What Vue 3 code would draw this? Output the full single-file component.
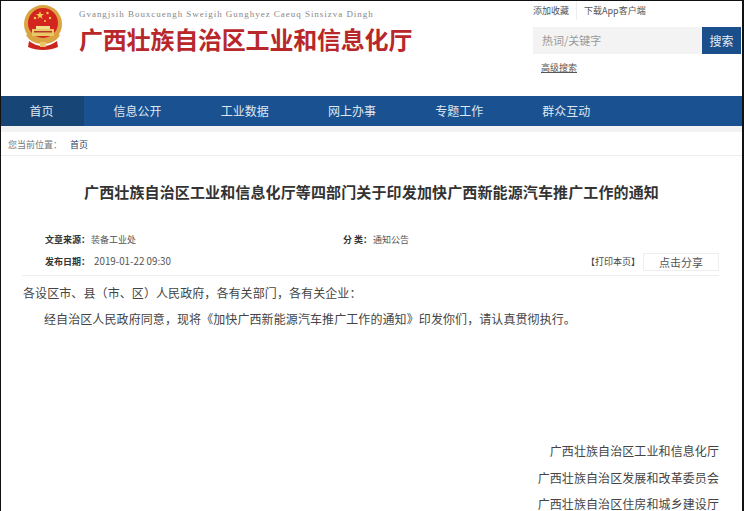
<template>
  <div class="page">
    <header class="header">
      <div class="brand">
        <svg class="emblem" viewBox="0 0 40 46" width="40" height="46">
          <circle cx="20" cy="19" r="19" fill="#d9a441" />
          <circle cx="20" cy="18" r="15" fill="#d3241f" />
          <path d="M17 6l1 3h3l-2.500 2 1 3-2.500-2-2.500 2 1-3L13 9h3z" fill="#f2cf4f" />
          <circle cx="12" cy="13" r="1.200" fill="#f2cf4f" />
          <circle cx="24.500" cy="8" r="1.200" fill="#f2cf4f" />
          <circle cx="27" cy="13" r="1.200" fill="#f2cf4f" />
          <circle cx="22" cy="16" r="1" fill="#f2cf4f" />
          <path d="M9 24h22v7H9z" fill="#e9c766" />
          <path d="M13 21h14v3H13z" fill="#f3dc8c" />
          <path d="M11 26h18v1.500H11z" fill="#b5382a" />
          <path d="M3 30c3 6 10 9 17 9s14-3 17-9l-3-1c-3 4-9 6-14 6s-11-2-14-6z" fill="#d9a441" />
          <path d="M6 36c4 3 9 5 14 5s10-2 14-5l1 6c-4 2-10 3-15 3S9 44 5 42z" fill="#c9261f" />
          <path d="M17 37h6v5h-6z" fill="#e9c766" />
        </svg>
        <div class="brand__text">
          <div class="brand__latin">Gvangjsih Bouxcuengh Sweigih Gunghyez Caeuq Sinsizva Dingh</div>
          <div class="brand__name">广西壮族自治区工业和信息化厅</div>
        </div>
      </div>
      <div class="tools">
        <div class="tools__links">
          <span class="tools__fav">添加收藏</span>
          <span>下载App客户端</span>
        </div>
        <div class="search">
          <div class="search__input">热词/关键字</div>
          <div class="search__btn">搜索</div>
        </div>
        <div class="tools__adv">高级搜索</div>
      </div>
    </header>

    <nav class="nav">
      <a
        v-for="(item, i) in navItems"
        :key="item"
        :class="['nav__item', { 'nav__item--active': i === 0 }]"
      >{{ item }}</a>
    </nav>

    <div class="crumb">
      <span class="crumb__label">您当前位置&#xFF1A;</span>
      <span class="crumb__link">首页</span>
    </div>

    <h1 class="title">广西壮族自治区工业和信息化厅等四部门关于印发加快广西新能源汽车推广工作的通知</h1>

    <div class="meta">
      <div class="meta__row">
        <div class="meta__source"><b>文章来源&#xFF1A;</b><span>装备工业处</span></div>
        <div class="meta__type"><b>分 类&#xFF1A;</b><span>通知公告</span></div>
      </div>
      <div class="meta__row meta__row--date">
        <div class="meta__date"><b>发布日期&#xFF1A;</b><span>2019-01-22 09:30</span></div>
        <div class="meta__actions">
          <span class="meta__print">【打印本页】</span>
          <span class="meta__share">点击分享</span>
        </div>
      </div>
    </div>

    <article class="body">
      <p class="body__line">各设区市、县&#xFF08;市、区&#xFF09;人民政府&#xFF0C;各有关部门&#xFF0C;各有关企业&#xFF1A;</p>
      <p class="body__line body__line--indent">经自治区人民政府同意&#xFF0C;现将《加快广西新能源汽车推广工作的通知》印发你们&#xFF0C;请认真贯彻执行。</p>
      <div class="signers">
        <p v-for="name in signers" :key="name">{{ name }}</p>
      </div>
    </article>
  </div>
</template>

<script setup>
const navItems = ['首页', '信息公开', '工业数据', '网上办事', '专题工作', '群众互动']

const signers = [
  '广西壮族自治区工业和信息化厅',
  '广西壮族自治区发展和改革委员会',
  '广西壮族自治区住房和城乡建设厅'
]
</script>

<style>
html,
body {
  margin: 0;
  height: 511px;
  overflow: hidden;
  background: #fff;
}
</style>

<style scoped>
.page {
  box-sizing: border-box;
  width: 744px;
  height: 511px;
  overflow: hidden;
  border-top: 1px solid #111;
  border-left: 1px solid #111;
  border-right: 2px solid #111;
  background: #fff;
  color: #444;
  font-family: "Noto Sans CJK SC", "Liberation Sans", sans-serif;
}

.header {
  display: flex;
  justify-content: space-between;
  height: 95px;
}

.brand {
  display: flex;
  align-items: flex-start;
  padding: 4px 0 0 22px;
}

.emblem {
  margin-right: 16px;
}

.brand__latin {
  margin-top: 3px;
  font-family: "Liberation Serif", serif;
  font-size: 9px;
  line-height: 12px;
  letter-spacing: 0.97px;
  color: #888;
}

.brand__name {
  margin-top: 2px;
  font-size: 24px;
  line-height: 34px;
  font-weight: 700;
  letter-spacing: -0.2px;
  color: #b8282b;
}

.tools {
  width: 208px;
  margin-right: 1px;
  font-size: 9px;
}

.tools__links {
  display: flex;
  height: 19px;
  line-height: 19px;
  color: #555;
}

.tools__fav {
  margin-right: 7px;
  padding-right: 7px;
  border-right: 1px solid #eee;
}

.search {
  display: flex;
  margin-top: 7px;
  height: 27px;
}

.search__input {
  flex: 1;
  padding-left: 9px;
  background: #f3f3f3;
  font-size: 11px;
  line-height: 27px;
  color: #999;
}

.search__btn {
  width: 39px;
  background: #1a4f8b;
  font-size: 12px;
  line-height: 27px;
  text-align: center;
  color: #e6edf5;
}

.tools__adv {
  margin: 7px 0 0 8px;
  line-height: 13px;
  text-decoration: underline;
  color: #555;
}

.nav {
  display: flex;
  height: 30px;
  background: #1a5190;
}

.nav__item {
  width: 107.2px;
  font-size: 12px;
  line-height: 30px;
  text-align: center;
  color: #dfe7f0;
}

.nav__item--active {
  flex: none;
  box-sizing: border-box;
  width: 83px;
  padding-right: 2px;
  background: #174576;
}

.crumb {
  display: flex;
  box-sizing: border-box;
  height: 30px;
  padding: 13px 0 0 7px;
  background: linear-gradient(#f3f3f3 0, #f3f3f3 6px, #fff 6px);
  border-bottom: 1px solid #eee;
  font-size: 9px;
  line-height: 12px;
}

.crumb__label {
  width: 62px;
  color: #777;
}

.crumb__link {
  color: #1f3f66;
}

.title {
  margin: 26px 0 0;
  font-size: 15px;
  line-height: 20px;
  font-weight: 700;
  letter-spacing: 0.13px;
  text-align: center;
  color: #333;
}

.meta {
  margin: 31px 23px 0 21px;
  padding-bottom: 3px;
  border-bottom: 1px solid #eee;
  font-size: 9px;
  line-height: 14px;
  color: #555;
}

.meta__row {
  display: flex;
  height: 14px;
  padding-left: 23px;
}

.meta__row--date {
  justify-content: space-between;
  align-items: flex-start;
  height: 20px;
  margin-top: 5px;
}

.meta__date {
  line-height: 18px;
}

.meta b {
  margin-right: 1px;
  color: #333;
}

.meta__source {
  width: 298px;
}

.meta__date span {
  margin-left: 3px;
  font-size: 9.800px;
}

.meta__actions {
  display: flex;
  align-items: center;
  margin-top: 1px;
}

.meta__print {
  margin-right: 3px;
  color: #444;
}

.meta__share {
  box-sizing: border-box;
  width: 76px;
  height: 18px;
  border: 1px solid #eee;
  font-size: 11px;
  line-height: 17px;
  text-align: center;
}

.body {
  padding: 4px 23px 0 22px;
  font-size: 12px;
  line-height: 26px;
  letter-spacing: 0.09px;
  color: #444;
}

.body p {
  margin: 0;
}

.body__line--indent {
  padding-left: 21px;
}

.signers {
  margin-top: 106px;
  text-align: right;
}

.signers p {
  line-height: 26.500px;
}
</style>
